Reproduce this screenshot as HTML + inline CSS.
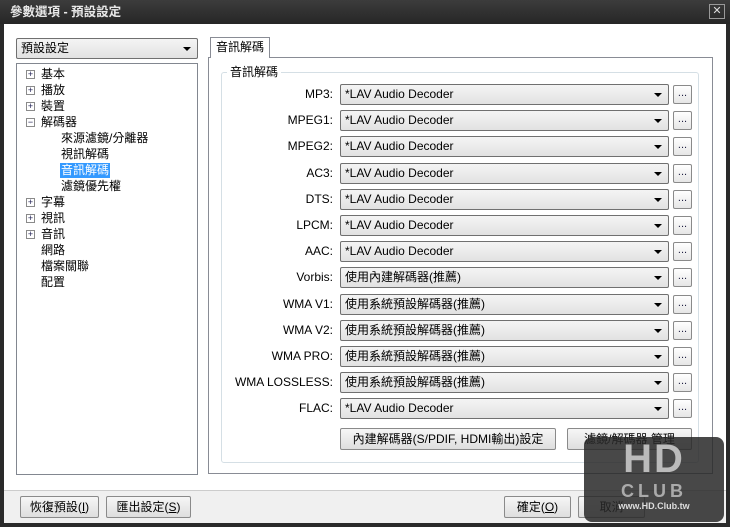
<!DOCTYPE html><html><head><meta charset="utf-8"><style>
*{box-sizing:border-box;margin:0;padding:0}
body{width:730px;height:527px;background:#2a2a2a;font-family:"Liberation Sans","Noto Sans CJK TC",sans-serif;font-size:12px;color:#000;position:relative;overflow:hidden}
.a{position:absolute}
.title{left:0;top:0;width:730px;height:24px;background:linear-gradient(#3c3c3c,#262626);color:#e8e8e8;font-size:12.5px;font-weight:bold;padding:5px 10px;line-height:14px}
.close{left:709px;top:4px;width:16px;height:15px;border:1px solid #999;color:#ddd;font-size:11px;text-align:center;line-height:13px}
.main{left:4px;top:24px;width:722px;height:466px;background:#fff}
.bot{left:4px;top:490px;width:722px;height:33px;background:#f0f0f0;border-top:1px solid #ccc}
.combo{height:21px;border:1px solid #707070;border-radius:2px;background:linear-gradient(#f4f4f4,#e2e2e2);padding:0 4px;font-size:12px;line-height:19px;white-space:nowrap}
.combo:after{content:"";position:absolute;right:6px;top:8px;border:4px solid transparent;border-top:4px solid #000;border-bottom:0}
.dots{width:19px;height:19px;border:1px solid #8a8a8a;border-radius:2px;background:linear-gradient(#fff,#e6e6e6);text-align:center;font-size:11px;color:#224;line-height:14px}
.lbl{width:110px;text-align:right;font-size:12px;line-height:21px}
.btn{height:22px;border:1px solid #8a8a8a;border-radius:2px;background:linear-gradient(#f6f6f6,#dedede);text-align:center;line-height:20px;font-size:12px;white-space:nowrap}
.tree div{position:absolute;font-size:12px;white-space:nowrap;line-height:15px}
.pm{display:inline-block;width:9px;height:9px;border:1px solid #8a8a8a;font-size:9px;line-height:7px;text-align:center;color:#225;margin-right:6px;vertical-align:1px;background:#fff}
</style></head><body>
<div class="a title">參數選項 - 預設設定</div>
<div class="a close">✕</div>
<div class="a main"></div>
<div class="a bot"></div>
<div class="a combo" style="left:16px;top:38px;width:182px">預設設定</div>
<div class="a tree" style="left:16px;top:63px;width:182px;height:412px;border:1px solid #828790;background:#fff">
<div style="left:9px;top:3px"><span class="pm">+</span>基本</div>
<div style="left:9px;top:19px"><span class="pm">+</span>播放</div>
<div style="left:9px;top:35px"><span class="pm">+</span>裝置</div>
<div style="left:9px;top:51px"><span class="pm">−</span>解碼器</div>
<div style="left:44px;top:67px">來源濾鏡/分離器</div>
<div style="left:44px;top:83px">視訊解碼</div>
<div style="left:43px;top:99px;background:#3399ff;color:#fff;padding:0 1px">音訊解碼</div>
<div style="left:44px;top:115px">濾鏡優先權</div>
<div style="left:9px;top:131px"><span class="pm">+</span>字幕</div>
<div style="left:9px;top:147px"><span class="pm">+</span>視訊</div>
<div style="left:9px;top:163px"><span class="pm">+</span>音訊</div>
<div style="left:24px;top:179px">網路</div>
<div style="left:24px;top:195px">檔案關聯</div>
<div style="left:24px;top:211px">配置</div>
</div>
<div class="a" style="left:208px;top:57px;width:505px;height:417px;border:1px solid #898c95;background:#fff"></div>
<div class="a" style="left:210px;top:37px;width:60px;height:21px;border:1px solid #898c95;border-bottom:none;background:#fff;padding:0 5px;line-height:19px;font-size:12px;white-space:nowrap">音訊解碼</div>
<div class="a" style="left:221px;top:72px;width:478px;height:391px;border:1px solid #d5dfe5;border-radius:3px"></div>
<div class="a" style="left:227px;top:65px;background:#fff;padding:0 3px;font-size:12px;line-height:15px">音訊解碼</div>
<div id="rows"></div>
<div class="a btn" style="left:340px;top:428px;width:216px">內建解碼器(S/PDIF, HDMI輸出)設定</div>
<div class="a btn" style="left:567px;top:428px;width:125px">濾鏡/解碼器 管理</div>
<div class="a btn" style="left:20px;top:496px;width:79px">恢復預設(<u>I</u>)</div>
<div class="a btn" style="left:106px;top:496px;width:85px">匯出設定(<u>S</u>)</div>
<div class="a btn" style="left:504px;top:496px;width:67px">確定(<u>O</u>)</div>
<div class="a btn" style="left:578px;top:496px;width:67px">取消</div>
<div class="a" style="left:584px;top:437px;width:140px;height:85px;background:rgba(40,40,40,.85);border-radius:8px;color:#ccc;font-weight:bold;text-align:center">
<div style="font-size:40px;line-height:44px;letter-spacing:2px;color:#bbb">HD</div>
<div style="font-size:18px;line-height:20px;letter-spacing:4px;color:#aaa">CLUB</div>
<div style="font-size:9px;color:#ddd">www.HD.Club.tw</div></div>
<script>
var L=["MP3:","MPEG1:","MPEG2:","AC3:","DTS:","LPCM:","AAC:","Vorbis:","WMA V1:","WMA V2:","WMA PRO:","WMA LOSSLESS:","FLAC:"];
var V=["*LAV Audio Decoder","*LAV Audio Decoder","*LAV Audio Decoder","*LAV Audio Decoder","*LAV Audio Decoder","*LAV Audio Decoder","*LAV Audio Decoder","使用內建解碼器(推薦)","使用系統預設解碼器(推薦)","使用系統預設解碼器(推薦)","使用系統預設解碼器(推薦)","使用系統預設解碼器(推薦)","*LAV Audio Decoder"];
var h="";for(var i=0;i<13;i++){var y=Math.round(84+i*26.2);
h+='<div class="a lbl" style="left:223px;top:'+y+'px">'+L[i]+'</div><div class="a combo" style="left:340px;top:'+y+'px;width:329px">'+V[i]+'</div><div class="a dots" style="left:673px;top:'+(y+1)+'px">...</div>';}
document.getElementById("rows").innerHTML=h;
</script>
</body></html>
